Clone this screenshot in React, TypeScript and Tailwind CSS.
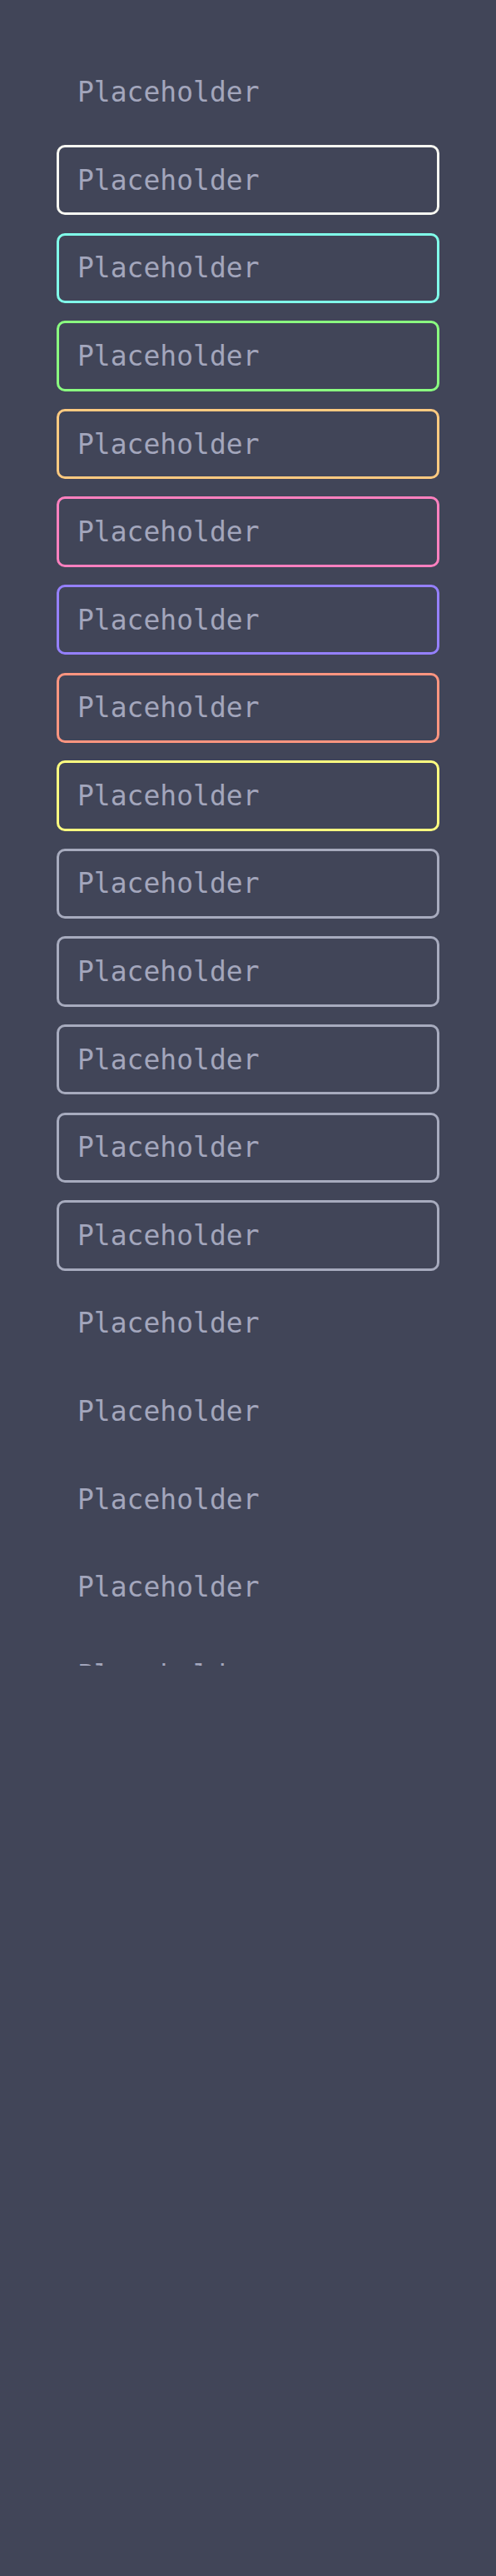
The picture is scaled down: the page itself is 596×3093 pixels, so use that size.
const borders = [
  "border-transparent",
  "border-[#f8f8f2]",
  "border-[#80ffea]",
  "border-[#8aff80]",
  "border-[#ffca80]",
  "border-[#ff80bf]",
  "border-[#9580ff]",
  "border-[#ff9580]",
  "border-[#ffff80]",
  "border-[#a7abbe]",
  "border-[#a7abbe]",
  "border-[#a7abbe]",
  "border-[#a7abbe]",
  "border-[#a7abbe]",
  "border-transparent",
  "border-transparent",
  "border-transparent",
  "border-transparent",
  "border-transparent",
];

export default function App() {
  return (
    <div className="min-h-[3093px] w-full bg-[#414558]">
      <div className="h-[2000px] overflow-hidden px-[68px] pt-[68.4px] flex flex-col gap-[21.1px]">
        {borders.map((b, i) => (
          <div
            key={i}
            className={`shrink-0 h-[84.5px] w-full rounded-[10px] border-[3.5px] ${b} flex items-center pl-[22px]`}
          >
            <span className="text-[33px] leading-none text-[#a3a6bc] font-['DejaVu_Sans_Mono',monospace]">
              Placeholder
            </span>
          </div>
        ))}
      </div>
    </div>
  );
}
